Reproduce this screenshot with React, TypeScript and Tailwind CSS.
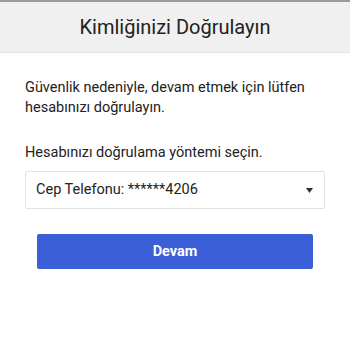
import React from "react";

export default function App() {
  return (
    <div className="w-[350px] h-[350px] bg-white" style={{ fontFamily: "Roboto, 'Noto Sans', sans-serif" }}>
      <div className="h-[2px] bg-[#9a9a9a]" />
      <div className="h-[51px] bg-[#f0f0f0] border-b border-[#e4e4e4] flex items-center justify-center">
        <span className="text-[20px] text-[#222] leading-none">Kimliğinizi Doğrulayın</span>
      </div>
      <div className="px-[25px] pt-[25px]">
        <p className="text-[14.5px] leading-[20px] text-[#222]">
          Güvenlik nedeniyle, devam etmek için lütfen hesabınızı doğrulayın.
        </p>
        <p className="mt-[25px] text-[14.5px] leading-[20px] text-[#222]">Hesabınızı doğrulama yöntemi seçin.</p>
      </div>
      <div className="mx-[25px] mt-[8px] h-[38px] border border-[#e2e2e2] rounded-[2px] flex items-center justify-between pl-[10px] pr-[11px]">
        <span className="text-[14.5px] text-[#222]">Cep Telefonu: ******4206</span>
        <svg width="7" height="5" viewBox="0 0 7 5"><path d="M0 0h7L3.5 5z" fill="#333" /></svg>
      </div>
      <div className="mx-[37px] mt-[25px] h-[35px] bg-[#3a5fd6] rounded-[2px] flex items-center justify-center">
        <span className="text-white text-[14.5px] font-bold">Devam</span>
      </div>
    </div>
  );
}
